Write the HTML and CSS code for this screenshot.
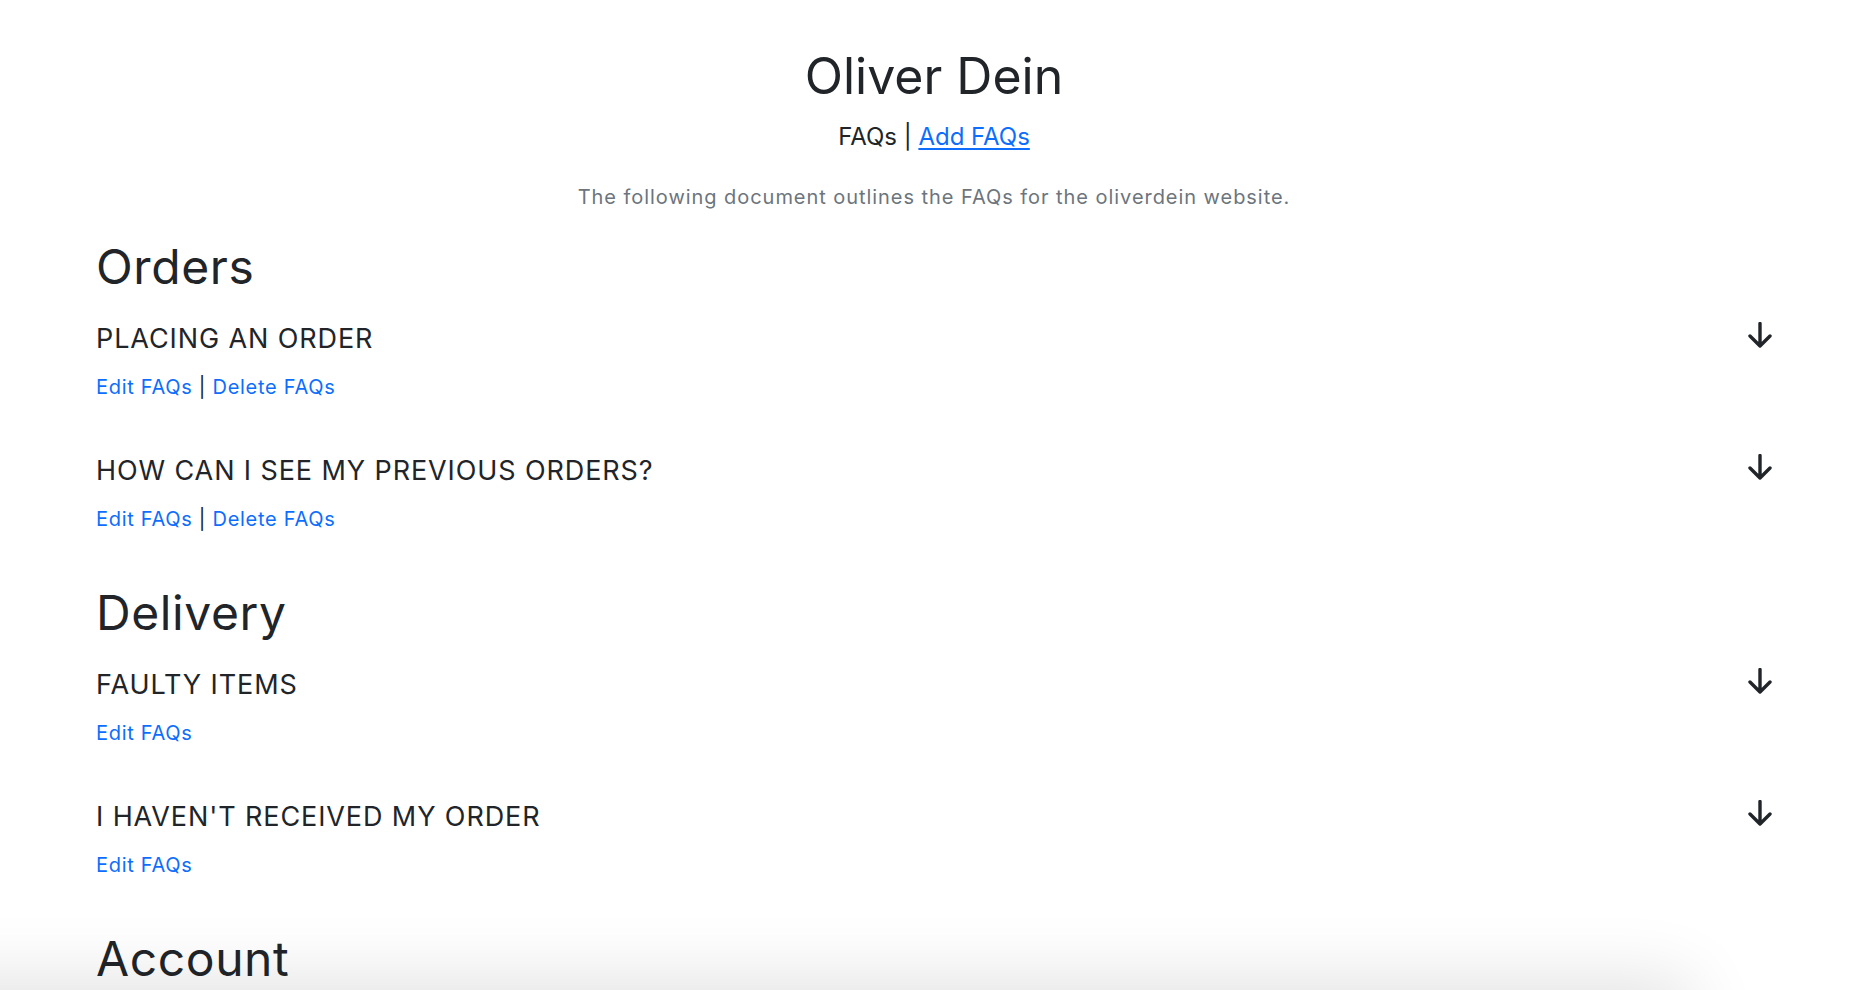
FILE: index.html
```html
<!DOCTYPE html>
<html lang="en">
<head>
<meta charset="utf-8">
<title>Oliver Dein - FAQs</title>
<link rel="stylesheet" href="styles.css">
</head>
<body>
<main class="page">
  <header class="hero">
    <h1 class="hero-title">Oliver Dein</h1>
    <p class="hero-nav">FAQs | <a href="#" class="hero-link">Add FAQs</a></p>
    <p class="hero-lead">The following document outlines the FAQs for the oliverdein website.</p>
  </header>

  <section class="faq-section">
    <h2 class="section-title">Orders</h2>
    <div class="faq-item">
      <div class="faq-question">
        <h3 class="question-text">PLACING AN ORDER</h3>
        <svg class="arrow" viewBox="0 0 24 26" width="24" height="26"><path d="M12 1.5V24M2 14l10 10 10-10"/></svg>
      </div>
      <p class="faq-actions"><a href="#" class="action-link">Edit FAQs</a> | <a href="#" class="action-link">Delete FAQs</a></p>
    </div>
    <div class="faq-item">
      <div class="faq-question">
        <h3 class="question-text">HOW CAN I SEE MY PREVIOUS ORDERS?</h3>
        <svg class="arrow" viewBox="0 0 24 26" width="24" height="26"><path d="M12 1.5V24M2 14l10 10 10-10"/></svg>
      </div>
      <p class="faq-actions"><a href="#" class="action-link">Edit FAQs</a> | <a href="#" class="action-link">Delete FAQs</a></p>
    </div>
  </section>

  <section class="faq-section">
    <h2 class="section-title">Delivery</h2>
    <div class="faq-item">
      <div class="faq-question">
        <h3 class="question-text">FAULTY ITEMS</h3>
        <svg class="arrow" viewBox="0 0 24 26" width="24" height="26"><path d="M12 1.5V24M2 14l10 10 10-10"/></svg>
      </div>
      <p class="faq-actions"><a href="#" class="action-link">Edit FAQs</a></p>
    </div>
    <div class="faq-item">
      <div class="faq-question">
        <h3 class="question-text">I HAVEN'T RECEIVED MY ORDER</h3>
        <svg class="arrow" viewBox="0 0 24 26" width="24" height="26"><path d="M12 1.5V24M2 14l10 10 10-10"/></svg>
      </div>
      <p class="faq-actions"><a href="#" class="action-link">Edit FAQs</a></p>
    </div>
  </section>

  <section class="faq-section">
    <h2 class="section-title">Account</h2>
    <div class="faq-item">
      <div class="faq-question">
        <h3 class="question-text">CHANGING MY DETAILS</h3>
        <svg class="arrow" viewBox="0 0 24 26" width="24" height="26"><path d="M12 1.5V24M2 14l10 10 10-10"/></svg>
      </div>
      <p class="faq-actions"><a href="#" class="action-link">Edit FAQs</a></p>
    </div>
  </section>
</main>
<div class="bottom-shade"></div>
</body>
</html>
```

FILE: styles.css
```css
html, body {
  margin: 0;
  padding: 0;
  background: #ffffff;
}

body {
  font-family: Inter, "Open Sans", "Liberation Sans", sans-serif;
  color: #212529;
  line-height: 1.2;
}

.page {
  padding: 46px 90px 40px 96px;
}

.hero {
  display: flex;
  flex-direction: column;
  align-items: center;
  text-align: center;
}

.hero-title {
  margin: 0;
  font-size: 50px;
  font-weight: 400;
  line-height: 60px;
}

.hero-nav {
  margin: 16px 0 0;
  font-size: 24px;
  line-height: 29px;
}

.hero-link {
  color: #0d6efd;
  text-decoration: underline;
  text-underline-offset: 3px;
  text-decoration-thickness: 2px;
}

.hero-lead {
  margin: 34px 0 0;
  font-size: 20px;
  line-height: 24px;
  color: #6c757d;
  letter-spacing: 0.95px;
}

.faq-section {
  display: flex;
  flex-direction: column;
}

.section-title {
  margin: 30px 0 0;
  font-size: 48px;
  font-weight: 400;
  line-height: 56px;
  letter-spacing: 0.6px;
}

.faq-section + .faq-section .section-title {
  margin-top: -2px;
}

.faq-item {
  display: flex;
  flex-direction: column;
  margin-top: 28px;
  margin-bottom: 56px;
}

.faq-item + .faq-item {
  margin-top: 0;
}

.faq-question {
  display: flex;
  justify-content: space-between;
  align-items: flex-start;
}

.question-text {
  margin: 0;
  font-size: 27px;
  font-weight: 400;
  line-height: 32px;
  letter-spacing: 0.9px;
}

.arrow {
  flex: none;
  margin-top: -1px;
  fill: none;
  stroke: #212529;
  stroke-width: 3.4;
  stroke-linecap: round;
  stroke-linejoin: round;
}

.faq-actions {
  margin: 20px 0 0;
  font-size: 20px;
  line-height: 24px;
  letter-spacing: 0.7px;
}

.action-link {
  color: #0d6efd;
  text-decoration: none;
}

.bottom-shade {
  position: fixed;
  top: 100%;
  left: -80px;
  width: 1760px;
  height: 60px;
  box-shadow: 0 0 70px 10px rgba(0, 0, 0, 0.12);
  pointer-events: none;
}
```
